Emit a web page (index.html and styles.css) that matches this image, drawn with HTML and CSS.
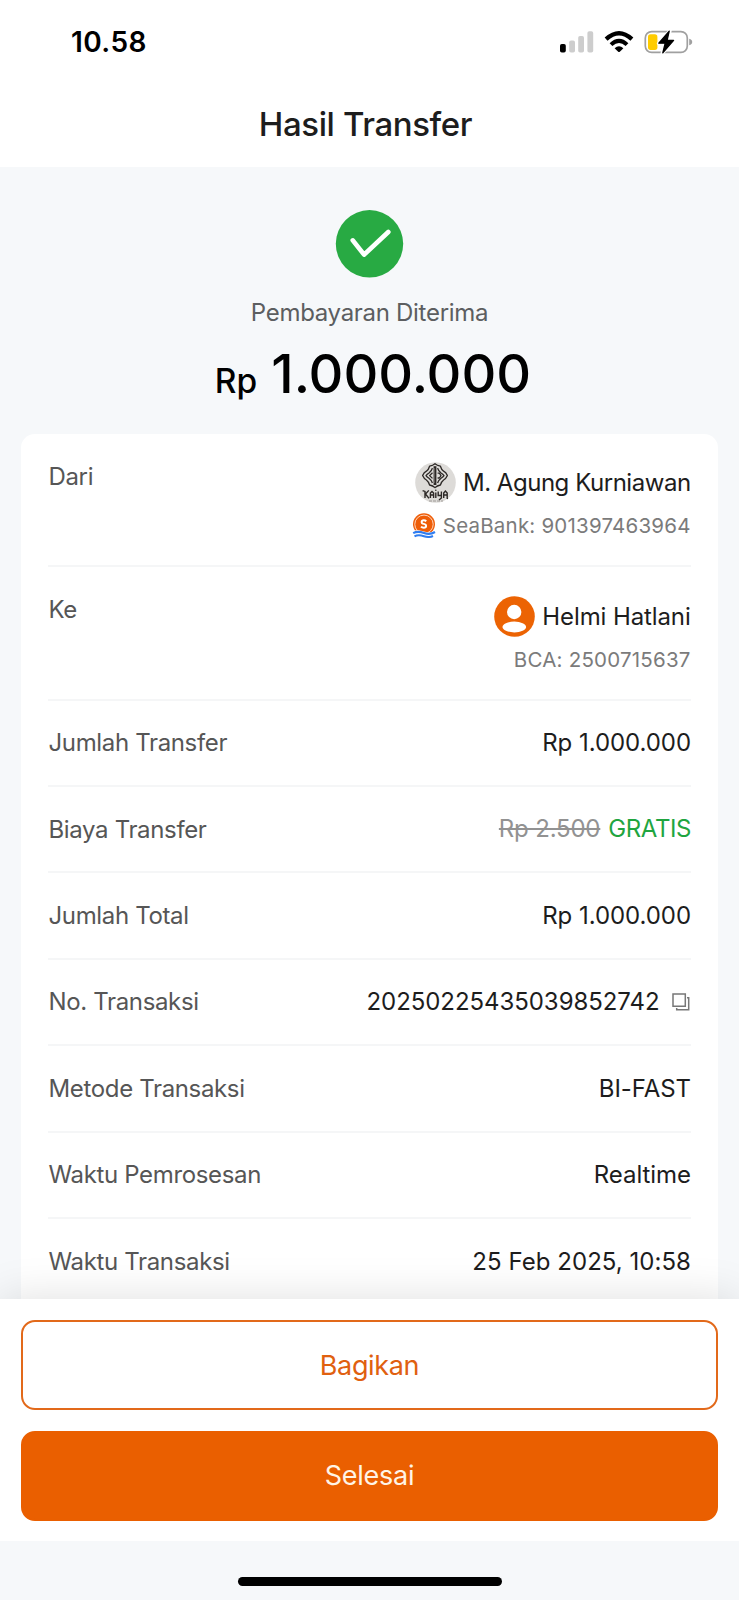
FILE: index.html
```html
<!DOCTYPE html>
<html lang="id">
<head>
<meta charset="utf-8">
<title>Hasil Transfer</title>
<link rel="stylesheet" href="styles.css">
</head>
<body>
<div class="screen">
  <header class="top">
    <div class="status">
      <span class="time">10.58</span>
      <div class="status-icons">
        <svg width="34" height="22" viewBox="0 0 34 22">
          <rect x="0" y="13" width="5.8" height="8.6" rx="1.8" fill="#000"/>
          <rect x="9.2" y="9.4" width="5.8" height="12.2" rx="1.8" fill="#cdcdcd"/>
          <rect x="18.2" y="5" width="5.8" height="16.6" rx="1.8" fill="#cdcdcd"/>
          <rect x="27.4" y="0.3" width="5.8" height="21.3" rx="1.8" fill="#cdcdcd"/>
        </svg>
        <svg width="30" height="22" viewBox="0 0 30 22">
          <path d="M2.1 8.2Q15 -3.6 27.9 8.2" fill="none" stroke="#000" stroke-width="4.3"/>
          <path d="M7 13.6Q15 6 23 13.6" fill="none" stroke="#000" stroke-width="4"/>
          <path d="M10.6 17.2Q15 13.4 19.4 17.2L15.8 20.7Q15 21.4 14.2 20.7Z" fill="#000"/>
        </svg>
        <svg width="49" height="24" viewBox="0 0 49 24">
          <rect x="1.3" y="1.6" width="42" height="20.8" rx="6.4" fill="none" stroke="#a0a0a0" stroke-width="1.7"/>
          <path d="M45.2 8.7Q48.2 9.4 48.2 12T45.2 15.3Z" fill="#a0a0a0"/>
          <rect x="4" y="4.3" width="9.4" height="15.6" rx="2.6" fill="#ffcc00"/>
          <path d="M26 0.6 14.6 13.5H20.7L18.2 23.4 30 10.4H23.7L26 0.6Z" fill="#000" stroke="#fff" stroke-width="3.4" stroke-linejoin="round"/>
          <path d="M25.2 1.2 14.8 13.2H21.2L18.8 22.8 29.6 10.4H23.1Z" fill="#000" stroke="#000" stroke-width="1.3" stroke-linejoin="round"/>
        </svg>
      </div>
    </div>
    <h1 class="title">Hasil Transfer</h1>
  </header>

  <main class="content">
    <section class="hero">
      <svg class="check" width="69" height="68" viewBox="0 0 69 68">
        <circle cx="34.5" cy="33.8" r="33.7" fill="#28aa43"/>
        <path d="M17.8 30.4 29.1 44.6 53.3 22" fill="none" stroke="#fff" stroke-width="4.7" stroke-linecap="round" stroke-linejoin="round"/>
      </svg>
      <p class="state">Pembayaran Diterima</p>
      <p class="amount"><span class="currency">Rp</span><span>1.000.000</span></p>
    </section>

    <section class="card">
      <div class="row party">
        <span class="label">Dari</span>
        <div class="who">
          <div class="name long">
            <svg width="41" height="41" viewBox="0 0 41 41">
              <circle cx="20.5" cy="20.5" r="20.3" fill="#dddbd8"/>
              <g fill="none" stroke="#2c2826" stroke-width="1.3" stroke-linejoin="round">
                <path d="M20 1.6Q22 3.6 25.4 4.2Q26.4 7.6 28.6 9.2Q31 10.4 32.4 13.6Q31 16.8 28.6 18Q26.4 19.6 25.4 23Q22 23.6 20 25.6Q18 23.6 14.6 23Q13.6 19.6 11.4 18Q9 16.8 7.6 13.6Q9 10.4 11.4 9.2Q13.6 7.6 14.6 4.2Q18 3.6 20 1.6Z"/>
                <path d="M17.4 6.2Q16.8 8.8 14 11Q12 12.2 11 13.6Q12 15 14 16.2Q16.8 18.4 17.4 21M22.6 6.2Q23.2 8.8 26 11Q28 12.2 29 13.6Q28 15 26 16.2Q23.2 18.4 22.6 21"/>
                <path d="M17.5 10.8 14.6 13.6 17.5 16.4M22.6 11.2H24.4L26 13.6 24.4 16H22.6"/>
              </g>
              <path d="M20 4.2V23" stroke="#2c2826" stroke-width="2.8"/>
              <path d="M19.4 6V21" stroke="#8c8884" stroke-width=".6"/>
              <g fill="none" stroke="#2c2826" stroke-width="1.4">
                <path d="M7.6 28.6 10 29.4V36M13.8 28.4 10.5 32 14 36.4M15.4 36V31L17 29.4 18.6 31V36M15.4 33H18.6M20.8 30.5V36M23.2 29.6V33.5H26.2M26.4 29.4V36L24 38M28.7 36V31L30.4 29 32.2 31V36.3L33 36.6M28.7 33H32"/>
              </g>
              <circle cx="20.8" cy="28.3" r=".8" fill="#2c2826"/>
              <path d="M14 39H28" stroke="#908c88" stroke-width=".8" stroke-dasharray="3 1"/>
            </svg>
            <span>M. Agung Kurniawan</span>
          </div>
          <div class="bank">
            <svg width="24" height="25" viewBox="0 0 24 25">
              <circle cx="12" cy="11.3" r="11" fill="#ee5d08"/>
              <circle cx="12" cy="11.3" r="9.2" fill="none" stroke="#ffe3d0" stroke-width=".9"/>
              <path d="M14.3 8.3Q13.2 7.3 11.8 7.3C8.9 7.3 8.9 10.3 11.8 10.9C15 11.5 14.8 14.8 11.8 14.8Q10 14.8 9 13.7" fill="none" stroke="#fff" stroke-width="1.9"/>
              <path d="M0 18.8C4 16.3 8 17.3 12 18.6S20 19.6 24 17V25H0Z" fill="#fff"/>
              <path d="M1.2 20.2C5 18 8.5 18.7 12 20S19.5 21.2 23 19M2.5 23.4C5.5 21.7 8.5 22.1 12 23.2S18.5 24.2 21 23" fill="none" stroke="#2f7df0" stroke-width="2.1"/>
            </svg>
            <span>SeaBank: 901397463964</span>
          </div>
        </div>
      </div>
      <div class="row party">
        <span class="label">Ke</span>
        <div class="who">
          <div class="name">
            <svg width="41" height="41" viewBox="0 0 41 41">
              <circle cx="20.5" cy="20.5" r="20.3" fill="#ec6303"/>
              <circle cx="20.2" cy="16" r="7.2" fill="#fff"/>
              <ellipse cx="20.3" cy="31" rx="11.8" ry="5.4" fill="#fff"/>
            </svg>
            <span>Helmi Hatlani</span>
          </div>
          <div class="bank"><span>BCA: 2500715637</span></div>
        </div>
      </div>
      <div class="row"><span class="label">Jumlah Transfer</span><span class="value">Rp 1.000.000</span></div>
      <div class="row"><span class="label">Biaya Transfer</span><span class="value fee"><s class="old">Rp 2.500</s><span class="free">GRATIS</span></span></div>
      <div class="row"><span class="label">Jumlah Total</span><span class="value">Rp 1.000.000</span></div>
      <div class="row"><span class="label">No. Transaksi</span>
        <span class="value ref"><span>20250225435039852742</span>
          <svg width="18" height="18" viewBox="0 0 18 18" fill="none" stroke="#777" stroke-width="1.5">
            <path d="M1 1H13.3V13.3H1ZM15 4.7H16.7V16.7H4.7V15"/>
          </svg>
        </span>
      </div>
      <div class="row"><span class="label">Metode Transaksi</span><span class="value">BI-FAST</span></div>
      <div class="row"><span class="label">Waktu Pemrosesan</span><span class="value">Realtime</span></div>
      <div class="row"><span class="label">Waktu Transaksi</span><span class="value date">25 Feb 2025, 10:58</span></div>
    </section>
  </main>

  <footer class="actions">
    <button class="btn outline">Bagikan</button>
    <button class="btn solid">Selesai</button>
  </footer>
  <div class="home"><div class="home-bar"></div></div>
</div>
</body>
</html>
```

FILE: styles.css
```css
* {
  box-sizing: border-box;
}

body {
  margin: 0;
  background: #f6f8fa;
  font-family: Inter, "Liberation Sans", sans-serif;
  font-size: 24px;
  color: #1d1d1d;
}

h1,
p {
  margin: 0;
}

svg {
  display: block;
  flex: none;
}

.screen {
  height: 1600px;
  display: flex;
  flex-direction: column;
  overflow: hidden;
}

.top {
  height: 167px;
  flex: none;
  background: #fff;
}

.status {
  height: 84px;
  display: flex;
  align-items: center;
  justify-content: space-between;
  padding: 0 46px 0 71px;
}

.time {
  font-size: 28px;
  font-weight: 600;
  letter-spacing: 0.4px;
  color: #000;
}

.status-icons {
  display: flex;
  align-items: center;
  gap: 10px;
}

.title {
  padding-right: 8px;
  font-size: 33px;
  font-weight: 500;
  line-height: 81px;
  letter-spacing: -0.4px;
  text-align: center;
}

.content {
  flex: 1;
  min-height: 0;
  overflow: hidden;
}

.hero {
  height: 266.6px;
  display: flex;
  flex-direction: column;
  align-items: center;
  padding-top: 42.5px;
}

.state {
  margin-top: 20px;
  line-height: 30px;
  letter-spacing: -0.3px;
  color: #5c5e60;
}

.amount {
  display: flex;
  align-items: baseline;
  gap: 14px;
  margin-top: 16.5px;
  padding-left: 7px;
  font-size: 54px;
  font-weight: 500;
  line-height: 60px;
  color: #000;
}

.currency {
  font-size: 33.5px;
  line-height: 40px;
}

.card {
  margin: 0 21px;
  padding: 0 27px;
  border-radius: 14px 14px 0 0;
  background: #fff;
}

.row {
  height: 86.4px;
  display: flex;
  align-items: center;
  justify-content: space-between;
  border-bottom: 2px solid #f5f6f7;
}

.party {
  height: 133.5px;
  align-items: flex-start;
}

.label {
  padding-left: 0.5px;
  line-height: 85px;
  letter-spacing: -0.35px;
  color: #565656;
}

.value {
  letter-spacing: -0.06px;
}

.date {
  letter-spacing: 0.04px;
}

.who {
  display: flex;
  flex-direction: column;
  align-items: flex-end;
  gap: 9px;
  padding-top: 29px;
  padding-right: 0.4px;
}

.name {
  height: 40px;
  display: flex;
  align-items: center;
  gap: 7px;
  letter-spacing: -0.11px;
}

.long {
  letter-spacing: -0.47px;
}

.bank {
  height: 28px;
  display: flex;
  align-items: center;
  gap: 7px;
  font-size: 20.5px;
  letter-spacing: 0.21px;
  color: #7b7b7b;
}

.fee {
  display: flex;
  gap: 8px;
  padding-bottom: 2px;
}

.old {
  letter-spacing: -0.19px;
  color: #929292;
  text-decoration-thickness: 1.5px;
}

.free {
  letter-spacing: -0.42px;
  color: #1fa53f;
}

.ref {
  display: flex;
  align-items: center;
  gap: 12px;
  padding-right: 1.5px;
}

.actions {
  position: relative;
  flex: none;
  height: 242px;
  display: flex;
  flex-direction: column;
  gap: 20.5px;
  padding: 21px;
  background: #fff;
  box-shadow: 0 0 42px rgba(0, 0, 0, 0.13);
}

.btn {
  height: 90px;
  flex: none;
  padding: 1px 0 0;
  border: 2px solid #e2691a;
  border-radius: 14px;
  background: #fff;
  font: 400 27px/1 Inter, "Liberation Sans", sans-serif;
  letter-spacing: -0.35px;
  color: #e0600f;
}

.solid {
  padding: 0;
  border-color: #ea5f00;
  background: #ea5f00;
  letter-spacing: -0.25px;
  color: #fff4e6;
}

.home {
  position: relative;
  flex: none;
  height: 59px;
  display: flex;
  justify-content: center;
  align-items: flex-end;
  padding-bottom: 14px;
  background: #f6f8fa;
}

.home-bar {
  width: 264px;
  height: 9px;
  border-radius: 5px;
  background: #000;
}
```
